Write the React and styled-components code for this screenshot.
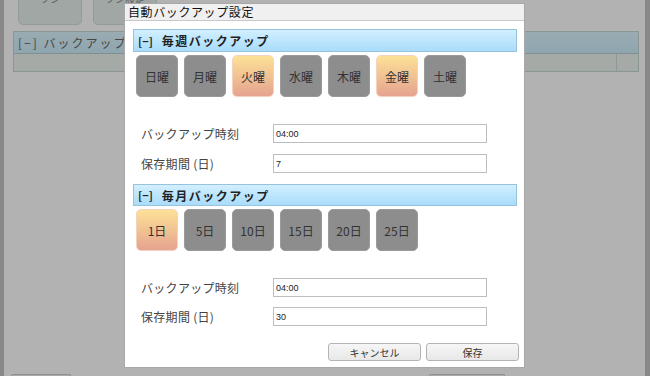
import styled, { createGlobalStyle } from 'styled-components'

const GlobalStyle = createGlobalStyle`
  html, body {
    margin: 0;
    padding: 0;
    overflow: hidden;
    background: #fff;
  }
  body {
    font-family: "Noto Sans CJK JP", "Noto Sans", sans-serif;
    color: #222;
  }
`

const JP = `"Noto Sans CJK JP", "Noto Sans", sans-serif`

const Page = styled.div`
  display: flex;
  width: 650px;
  height: 376px;
  overflow: hidden;
`

const SideBar = styled.div`
  width: ${p => p.$w}px;
  flex-shrink: 0;
  background: #c3c3c3;
`

const Main = styled.div`
  flex: 1;
  display: flex;
  flex-direction: column;
`

const Toolbar = styled.div`
  display: flex;
  gap: 11px;
  margin: -15px 0 0 14px;
`

const ToolButton = styled.div`
  width: 64px;
  height: 40px;
  box-sizing: border-box;
  border: 1px solid #d3dedb;
  border-radius: 5px;
  background: #e5f0ec;
  font-size: 10px;
  color: #888;
  text-align: center;
  padding-top: 5px;
`

const Panel = styled.div`
  margin: 6px 0 0 9px;
  width: 624px;
  border: 1px solid #c6d6d6;
`

const PanelHeader = styled.div`
  height: 21px;
  line-height: 21px;
  background: linear-gradient(#dcf6ff, #cdeefc);
  border-bottom: 1px solid #b8cdd4;
  font-size: 12px;
  letter-spacing: 2px;
  padding-left: 4px;
  color: #666;
`

const PanelRow = styled.div`
  display: grid;
  grid-template-columns: 1fr 22px;
  height: 17px;
  background: #ecf4f0;
  & > div + div {
    border-left: 1px solid #cbdada;
  }
`

const BottomBar = styled.div`
  margin-top: auto;
  display: flex;
  height: 2px;
`

const BottomButton = styled.div`
  margin-left: ${p => p.$ml}px;
  width: ${p => p.$w}px;
  border: 1px solid #cfcfcf;
  border-bottom: none;
  border-radius: 3px 3px 0 0;
  background: #f4f4f4;
`

const Overlay = styled.div`
  position: fixed;
  inset: 0;
  background: rgba(0, 0, 0, 0.3);
`

const Dialog = styled.div`
  position: absolute;
  left: 124px;
  top: 3px;
  width: 401px;
  box-sizing: border-box;
  background: #fff;
  border: 1px solid #a8a8a8;
`

const TitleBar = styled.div`
  height: 16px;
  line-height: 15px;
  background: #f0f0f0;
  border-bottom: 1px solid #c8c8c8;
  padding-left: 3px;
  font-size: 12px;
  letter-spacing: 0.6px;
  color: #111;
`

const Body = styled.div`
  display: flex;
  flex-direction: column;
  padding: 8px 7px 6px 8px;
`

const SectionHeader = styled.div`
  display: flex;
  align-items: center;
  gap: 9px;
  height: ${p => p.$h}px;
  margin-top: ${p => p.$mt}px;
  box-sizing: border-box;
  border: 1px solid #98c3dc;
  background: linear-gradient(#d2efff, #a9dcfb);
  font-family: ${JP};
  font-size: 12px;
  font-weight: bold;
  color: #222;
  padding-left: 4px;
  white-space: nowrap;
`

const Toggle = styled.span`
  font-size: 11px;
`

const SectionTitle = styled.span`
  letter-spacing: 1.5px;
`

const DayGrid = styled.div`
  display: flex;
  gap: 6px;
  margin: 3px 0 0 3px;
`

const DayButton = styled.div`
  width: 42px;
  height: 42px;
  box-sizing: border-box;
  border-radius: 5px;
  border: 1px solid ${p => (p.$on ? '#f3d2c0' : '#9a9a9a')};
  background: ${p => (p.$on ? 'linear-gradient(#fde196, #e5a38f)' : '#8d8d8d')};
  display: flex;
  align-items: center;
  justify-content: center;
  font-size: 12px;
  color: #333;
  font-family: ${JP};
`

const Form = styled.div`
  display: flex;
  flex-direction: column;
  gap: ${p => p.$gap}px;
  margin-top: 27px;
`

const Row = styled.div`
  display: grid;
  grid-template-columns: 132px 214px;
  align-items: center;
  padding-left: 8px;
  height: 19px;
`

const Label = styled.label`
  font-size: 12px;
  color: #444;
  letter-spacing: 0.3px;
  white-space: nowrap;
`

const Input = styled.input`
  width: 214px;
  height: 19px;
  box-sizing: border-box;
  border: 1px solid #bdbdbd;
  padding: 0 2px;
  font-family: "Liberation Sans", Arial, sans-serif;
  font-size: 9px;
  color: #222;
  outline: none;
`

const Footer = styled.div`
  display: flex;
  justify-content: flex-end;
  gap: 5px;
  margin: 17px -2px 0 0;
`

const FooterButton = styled.button`
  width: 93px;
  height: 18px;
  border: 1px solid #b4b4b4;
  border-radius: 3px;
  background: linear-gradient(#f6f6f6, #e8e8e8);
  font-family: ${JP};
  font-size: 10px;
  color: #333;
  padding: 0;
`

const weekDays = [
  { label: '日曜' },
  { label: '月曜' },
  { label: '火曜', on: true },
  { label: '水曜' },
  { label: '木曜' },
  { label: '金曜', on: true },
  { label: '土曜' },
]

const monthDays = [
  { label: '1日', on: true },
  { label: '5日' },
  { label: '10日' },
  { label: '15日' },
  { label: '20日' },
  { label: '25日' },
]

function Section({ title, days, mt, h, retention, gap }) {
  return (
    <>
      <SectionHeader $mt={mt} $h={h}>
        <Toggle>[−]</Toggle>
        <SectionTitle>{title}</SectionTitle>
      </SectionHeader>
      <DayGrid>
        {days.map(d => (
          <DayButton key={d.label} $on={d.on}>{d.label}</DayButton>
        ))}
      </DayGrid>
      <Form $gap={gap}>
        <Row>
          <Label>バックアップ時刻</Label>
          <Input defaultValue="04:00" />
        </Row>
        <Row>
          <Label>保存期間 (日)</Label>
          <Input defaultValue={retention} />
        </Row>
      </Form>
    </>
  )
}

export default function App() {
  return (
    <>
      <GlobalStyle />
      <Page>
        <SideBar $w={4} />
        <Main>
          <Toolbar>
            <ToolButton>ツン</ToolButton>
            <ToolButton>ツン設定</ToolButton>
          </Toolbar>
          <Panel>
            <PanelHeader>[−] バックアップ一覧</PanelHeader>
            <PanelRow>
              <div />
              <div />
            </PanelRow>
          </Panel>
          <BottomBar>
            <BottomButton $ml={7} $w={58} />
            <BottomButton $ml={358} $w={74} />
          </BottomBar>
        </Main>
        <SideBar $w={5} />
      </Page>
      <Overlay>
        <Dialog>
          <TitleBar>自動バックアップ設定</TitleBar>
          <Body>
            <Section title="毎週バックアップ" days={weekDays} mt={0} h={23} retention="7" gap={11} />
            <Section title="毎月バックアップ" days={monthDays} mt={11} h={22} retention="30" gap={10} />
            <Footer>
              <FooterButton>キャンセル</FooterButton>
              <FooterButton>保存</FooterButton>
            </Footer>
          </Body>
        </Dialog>
      </Overlay>
    </>
  )
}
